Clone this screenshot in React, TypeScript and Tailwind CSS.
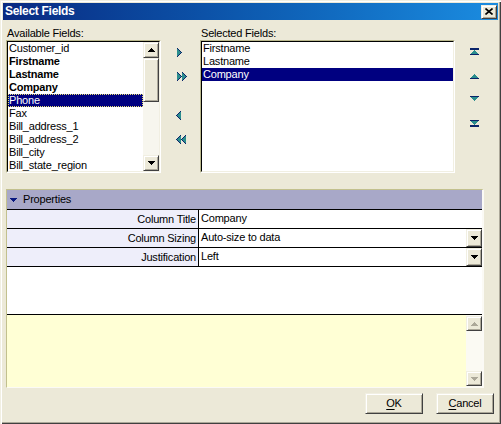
import React from 'react';

const TEAL = '#2b8e8e';
const NAVY = '#0a246a';

const availableFields = [
  { name: 'Customer_id' },
  { name: 'Firstname', bold: true },
  { name: 'Lastname', bold: true },
  { name: 'Company', bold: true },
  { name: 'Phone', selected: true },
  { name: 'Fax' },
  { name: 'Bill_address_1' },
  { name: 'Bill_address_2' },
  { name: 'Bill_city' },
  { name: 'Bill_state_region' },
];

const selectedFields = [
  { name: 'Firstname' },
  { name: 'Lastname' },
  { name: 'Company', selected: true },
];

const properties = [
  { label: 'Column Title', value: 'Company' },
  { label: 'Column Sizing', value: 'Auto-size to data', dropdown: true },
  { label: 'Justification', value: 'Left', dropdown: true },
];

// classic 3D raised face
function Raised({ className = '', children }: { className?: string; children?: React.ReactNode }) {
  return (
    <div
      className={`flex items-center justify-center bg-[#ece9d8] border border-t-[#f1efe2] border-l-[#f1efe2] border-r-[#404040] border-b-[#404040] shadow-[inset_1px_1px_0_#fff,inset_-1px_-1px_0_#aca899] ${className}`}
    >
      {children}
    </div>
  );
}

// small 7x4 scroll caret
function Caret({ dir, color = '#000' }: { dir: 'up' | 'down'; color?: string }) {
  const rows = [1, 3, 5, 7];
  const order = dir === 'up' ? rows : [...rows].reverse();
  return (
    <svg width="7" height="4" shapeRendering="crispEdges">
      {order.map((len, r) => (
        <rect key={r} x={(7 - len) / 2} y={r} width={len} height={1} fill={color} />
      ))}
    </svg>
  );
}

function HArrow({ dir, double }: { dir: 'left' | 'right'; double?: boolean }) {
  const offs = double ? [0, 5] : [0];
  const rects: React.ReactElement[] = [];
  offs.forEach((o) => {
    for (let r = 0; r < 9; r++) {
      const len = Math.min(r, 8 - r) + 1;
      if (dir === 'right') {
        if (len > 1) rects.push(<rect key={`t${o}-${r}`} x={o} y={r} width={len - 1} height={1} fill={TEAL} />);
        rects.push(<rect key={`n${o}-${r}`} x={o + len - 1} y={r} width={1} height={1} fill={NAVY} />);
      } else {
        const s = o + 5 - len;
        rects.push(<rect key={`n${o}-${r}`} x={s} y={r} width={1} height={1} fill={NAVY} />);
        if (len > 1) rects.push(<rect key={`t${o}-${r}`} x={s + 1} y={r} width={len - 1} height={1} fill={TEAL} />);
      }
    }
  });
  return (
    <svg width={double ? 10 : 5} height="9" shapeRendering="crispEdges">
      {rects}
    </svg>
  );
}

function VArrow({ dir, bar }: { dir: 'up' | 'down'; bar?: boolean }) {
  const rects: React.ReactElement[] = [];
  const top = dir === 'up' && bar ? 2 : 0;
  for (let r = 0; r < 5; r++) {
    const len = dir === 'up' ? 2 * r + 1 : 9 - 2 * r;
    const edge = dir === 'up' ? r === 4 : r === 0;
    rects.push(<rect key={r} x={(9 - len) / 2} y={top + r} width={len} height={1} fill={edge ? NAVY : TEAL} />);
  }
  if (bar) {
    const y = dir === 'up' ? 0 : 5;
    rects.push(<rect key="bar" x={0} y={y} width={9} height={2} fill={NAVY} />);
  }
  return (
    <svg width="9" height={bar ? 7 : 5} shapeRendering="crispEdges">
      {rects}
    </svg>
  );
}

function Sunken({ className = '', children }: { className?: string; children?: React.ReactNode }) {
  return (
    <div className={`border border-t-[#b9b78c] border-l-[#b9b78c] border-r-white border-b-white ${className}`}>
      <div className="h-full w-full border border-t-black border-l-black border-r-[#f1efe2] border-b-[#f1efe2] bg-white flex">
        {children}
      </div>
    </div>
  );
}

export default function App() {
  return (
    <div className="relative w-[501px] h-[424px] overflow-hidden bg-[#ece9d8] font-['Liberation_Sans',Arial,sans-serif] text-[11px] tracking-[-0.2px] text-black shadow-[inset_1px_1px_0_#f1efe2,inset_2px_2px_0_#fff,inset_-1px_-1px_0_#404040,inset_-2px_-2px_0_#aca899]">
      {/* Title bar */}
      <div className="mx-[3px] mt-[3px] h-[17px] flex items-center justify-between pl-[2px] pr-px bg-linear-to-r from-[#0a2a82] to-[#1b8ce0]">
        <span className="text-white font-bold text-[12px] tracking-[-0.3px] leading-[17px]">Select Fields</span>
        <Raised className="w-[16px] h-[14px]">
          <svg width="8" height="7" viewBox="0 0 8 7">
            <path d="M0.5 0.5L7.5 6.5M7.5 0.5L0.5 6.5" stroke="#000" strokeWidth="1.6" />
          </svg>
        </Raised>
      </div>

      {/* Field lists */}
      <div className="mt-[6px] pl-[6px] flex">
        <div className="w-[155px] flex flex-col">
          <div className="h-[14px] leading-[14px] pl-px">Available Fields:</div>
          <Sunken className="h-[133px]">
            <div className="flex-1 overflow-hidden">
              {availableFields.map((f) => (
                <div
                  key={f.name}
                  className={`h-[13px] leading-[13px] pl-px whitespace-nowrap ${f.bold ? 'font-bold' : ''} ${
                    f.selected ? 'bg-[#000080] text-white outline-1 outline-dotted outline-[#e8e070] -outline-offset-1' : ''
                  }`}
                >
                  {f.name}
                </div>
              ))}
            </div>
            <div className="w-[16px] flex flex-col bg-[#f7f6ee]">
              <Raised className="h-[16px] shrink-0">
                <Caret dir="up" />
              </Raised>
              <Raised className="h-[44px] shrink-0" />
              <div className="flex-1" />
              <Raised className="h-[16px] shrink-0">
                <Caret dir="down" />
              </Raised>
            </div>
          </Sunken>
        </div>

        {/* Move buttons */}
        <div className="w-[39px] flex flex-col items-start pl-[16px]">
          <div className="mt-[22px] h-[9px]">
            <HArrow dir="right" />
          </div>
          <div className="mt-[15px] h-[9px]">
            <HArrow dir="right" double />
          </div>
          <div className="mt-[30px] h-[9px] -ml-px">
            <HArrow dir="left" />
          </div>
          <div className="mt-[15px] h-[9px] -ml-px">
            <HArrow dir="left" double />
          </div>
        </div>

        <div className="w-[255px] flex flex-col">
          <div className="h-[14px] leading-[14px] pl-px">Selected Fields:</div>
          <Sunken className="h-[133px]">
            <div className="flex-1 overflow-hidden">
              {selectedFields.map((f) => (
                <div
                  key={f.name}
                  className={`h-[13px] leading-[13px] pl-px whitespace-nowrap ${f.selected ? 'bg-[#000080] text-white' : ''}`}
                >
                  {f.name}
                </div>
              ))}
            </div>
          </Sunken>
        </div>

        {/* Order buttons */}
        <div className="flex flex-col items-start pl-[15px]">
          <div className="mt-[22px] h-[7px] flex">
            <VArrow dir="up" bar />
          </div>
          <div className="mt-[19px] h-[5px] flex">
            <VArrow dir="up" />
          </div>
          <div className="mt-[17px] h-[5px] flex">
            <VArrow dir="down" />
          </div>
          <div className="mt-[19px] h-[7px] flex">
            <VArrow dir="down" bar />
          </div>
        </div>
      </div>

      {/* Properties panel */}
      <div className="ml-[6px] mt-[16px] w-[478px] h-[199px] flex flex-col border-t border-l border-r-2 border-b border-t-[#c2c08e] border-l-[#c2c08e] border-r-[#fbfaf5] border-b-[#fbfaf5]">
        <div className="h-[20px] shrink-0 flex items-center gap-[6px] pl-[3px] bg-[#a8a8c8] border-b border-black">
          <svg width="7" height="4" shapeRendering="crispEdges">
            <rect x="0" y="0" width="7" height="1" fill="#0a1a80" />
            <rect x="1" y="1" width="5" height="1" fill="#0a1a80" />
            <rect x="2" y="2" width="3" height="1" fill="#0a1a80" />
            <rect x="3" y="3" width="1" height="1" fill="#0a1a80" />
          </svg>
          <span className="leading-[19px]">Properties</span>
        </div>
        {properties.map((p) => (
          <div key={p.label} className="h-[19px] shrink-0 flex border-b border-black">
            <div className="w-[192px] shrink-0 border-r border-black bg-[#eeeefa] text-right pr-[2px] leading-[18px] whitespace-nowrap">
              {p.label}
            </div>
            <div className="flex-1 flex bg-white">
              <div className="flex-1 pl-[2px] leading-[17px] whitespace-nowrap">{p.value}</div>
              {p.dropdown && (
                <Raised className="w-[16px] h-[18px]">
                  <Caret dir="down" />
                </Raised>
              )}
            </div>
          </div>
        ))}
        <div className="h-[47px] shrink-0 bg-white" />
        <div className="flex-1 flex justify-end bg-[#ffffd5] border-t border-black">
          <div className="w-[16px] flex flex-col justify-between py-px bg-[#fbfaf3]">
            <Raised className="h-[15px]">
              <Caret dir="up" color="#aca899" />
            </Raised>
            <Raised className="h-[15px]">
              <Caret dir="down" color="#aca899" />
            </Raised>
          </div>
        </div>
      </div>

      {/* Dialog buttons */}
      <div className="mt-[5px] flex justify-end gap-[13px] pr-[7px]">
        <Raised className="w-[58px] h-[21px]">
          <span>
            <span className="underline underline-offset-2">O</span>K
          </span>
        </Raised>
        <Raised className="w-[58px] h-[21px]">
          <span>
            <span className="underline underline-offset-2">C</span>ancel
          </span>
        </Raised>
      </div>
    </div>
  );
}
